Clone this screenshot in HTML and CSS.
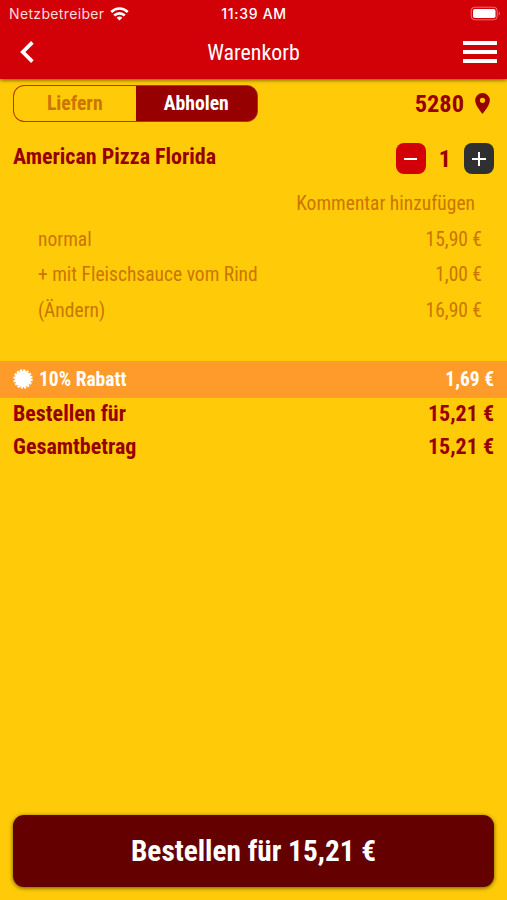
FILE: index.html
```html
<!DOCTYPE html>
<html lang="de">

<head>
    <meta charset="UTF-8">
    <title>Warenkorb</title>
    <link rel="stylesheet" href="styles.css">
</head>

<body>

    <header>
        <div class="status">
            <div class="carrier">
                <span>Netzbetreiber</span>
                <svg width="19" height="14" viewBox="0 0 19 14" fill="none" stroke="#fff" stroke-width="2.6">
                    <path d="M1.2 5C6 .4 13 .4 17.8 5" />
                    <path d="M4.2 8.5C7.2 5.6 11.8 5.6 14.8 8.5" />
                    <path d="M9.5 13.6L6.6 10.7Q9.5 8.3 12.4 10.7Z" fill="#fff" stroke="none" />
                </svg>
            </div>
            <div class="clock">11:39 AM</div>
            <svg class="battery" width="31" height="15" viewBox="0 0 31 15">
                <rect x="1.2" y="1.2" width="26" height="12.6" rx="3.6" fill="none" stroke="#fff" stroke-opacity=".45" />
                <rect x="3" y="3" width="22.5" height="9" rx="1.8" fill="#fff" />
                <path d="M28.8 5.5Q31 7.5 28.8 9.5Z" fill="#fff" fill-opacity=".5" />
            </svg>
        </div>
        <div class="navbar">
            <svg class="back" width="14" height="22" viewBox="0 0 14 22" fill="none" stroke="#fff" stroke-width="3.7">
                <path d="M12.4 1.4L2.8 11L12.4 20.6" />
            </svg>
            <h1>Warenkorb</h1>
            <div class="menu"><i></i><i></i><i></i></div>
        </div>
    </header>

    <main>
        <div class="delivery">
            <div class="toggle">
                <div class="option">Liefern</div>
                <div class="option active">Abholen</div>
            </div>
            <div class="zip">
                <span>5280</span>
                <svg width="15" height="21" viewBox="0 0 14 20" fill="#960000">
                    <path fill-rule="evenodd" d="M7 0A7 7 0 0 0 0 7C0 12.2 7 20 7 20S14 12.2 14 7A7 7 0 0 0 7 0ZM7 4.5A2.5 2.5 0 1 1 7 9.5A2.5 2.5 0 0 1 7 4.5Z" />
                </svg>
            </div>
        </div>

        <div class="item">
            <h2>American Pizza Florida</h2>
            <div class="quantity">
                <div class="btn minus"></div>
                <span>1</span>
                <div class="btn plus"></div>
            </div>
        </div>

        <div class="comment">Kommentar hinzufügen</div>
        <div class="details">
            <div class="row"><span>normal</span><span>15,90 €</span></div>
            <div class="row"><span>+ mit Fleischsauce vom Rind</span><span>1,00 €</span></div>
            <div class="row"><span>(Ändern)</span><span>16,90 €</span></div>
        </div>

        <div class="discount">
            <svg width="20" height="20" viewBox="-10 -10 20 20">
                <circle r="8.2" fill="#fff" />
                <circle r="8.7" fill="none" stroke="#fff" stroke-width="2" stroke-dasharray="2.2 1.217" />
            </svg>
            <span>10% Rabatt</span>
            <span class="price">1,69 €</span>
        </div>

        <div class="total"><span>Bestellen für</span><span>15,21 €</span></div>
        <div class="total"><span>Gesamtbetrag</span><span>15,21 €</span></div>
    </main>

    <footer>
        <div class="order">Bestellen für 15,21 €</div>
    </footer>

</body>

</html>
```

FILE: styles.css
```css
* {
    box-sizing: border-box;
}

body {
    margin: 0;
    height: 900px;
    display: flex;
    flex-direction: column;
    background: #ffcb08;
    color: #960000;
    font-family: 'Roboto Condensed', Roboto, sans-serif;
    font-stretch: 75%;
    overflow: hidden;
}

svg {
    display: block;
    flex: none;
}

header {
    height: 79px;
    background: #d20007;
    color: #fff;
    box-shadow: 0 1px 4px rgba(0, 0, 0, 0.6);
}

.status {
    height: 27px;
    display: grid;
    grid-template-columns: 1fr auto 1fr;
    align-items: center;
    padding: 0 8px 0 9px;
    font-family: Inter, sans-serif;
    font-stretch: normal;
    font-size: 14px;
}

.carrier {
    display: flex;
    align-items: center;
    gap: 6px;
    letter-spacing: 0.35px;
    color: #ffdcdc;
}

.clock {
    font-weight: 500;
    letter-spacing: 0.7px;
}

.battery {
    justify-self: end;
    margin-right: -2px;
}

.navbar {
    height: 50px;
    display: grid;
    grid-template-columns: 1fr auto 1fr;
    align-items: center;
    padding: 0 10px;
}

.back {
    margin-left: 10px;
}

h1 {
    margin: 0;
    font-size: 21.9px;
    font-weight: 400;
}

.menu {
    justify-self: end;
    width: 34px;
    display: grid;
    gap: 5px;
}

.menu i {
    height: 4px;
    background: #fff;
}

main {
    flex: 1;
}

.delivery {
    display: flex;
    justify-content: space-between;
    align-items: center;
    padding: 6px 17px 0 13px;
}

.toggle {
    width: 245px;
    height: 37px;
    display: flex;
    border: 1.5px solid #b03c04;
    border-radius: 11px;
    background: #960000;
    overflow: hidden;
}

.option {
    flex: 1;
    line-height: 35px;
    text-align: center;
    font-size: 19.7px;
    font-weight: 700;
    background: #ffcb08;
    color: #cb7500;
}

.active {
    background: #960000;
    color: #fff;
}

.zip {
    display: flex;
    align-items: center;
    gap: 11px;
    font-size: 24.4px;
    font-weight: 700;
}

.item {
    height: 64px;
    display: flex;
    justify-content: space-between;
    padding: 19px 13px 0;
}

h2 {
    margin: 0;
    line-height: 31px;
    font-size: 22px;
    font-weight: 700;
}

.quantity {
    display: flex;
    gap: 13px;
    padding-top: 2px;
    line-height: 32px;
    font-size: 24px;
    font-weight: 700;
}

.btn {
    width: 30px;
    height: 31px;
    border-radius: 8px;
    background: linear-gradient(#fff, #fff) center / 13px 2px no-repeat #d20007;
}

.plus {
    background: linear-gradient(#fff, #fff) center / 14px 2px no-repeat, linear-gradient(#fff, #fff) center / 2px 14px no-repeat #303030;
}

.comment,
.row {
    font-size: 19.5px;
    line-height: 35.5px;
    color: #cb7500;
}

.comment {
    padding-right: 32px;
    text-align: right;
}

.details {
    padding: 0 25px 0 38px;
}

.row {
    display: flex;
    justify-content: space-between;
}

.discount {
    height: 37px;
    margin-top: 33px;
    padding: 0 13px 1px;
    display: flex;
    align-items: center;
    gap: 6px;
    background: #ff9b2b;
    color: #fff;
    font-size: 19.5px;
    font-weight: 700;
}

.price {
    margin-left: auto;
}

.total {
    display: flex;
    justify-content: space-between;
    padding: 0 13px;
    line-height: 33px;
    font-size: 22px;
    font-weight: 700;
}

.discount + .total {
    margin-top: -1px;
}

footer {
    padding: 0 13px 13px;
}

.order {
    height: 72px;
    border-radius: 11px;
    background: #640000;
    box-shadow: 0 1px 4px rgba(0, 0, 0, 0.6);
    color: #fff;
    line-height: 72px;
    text-align: center;
    font-size: 29.3px;
    font-weight: 700;
}
```
